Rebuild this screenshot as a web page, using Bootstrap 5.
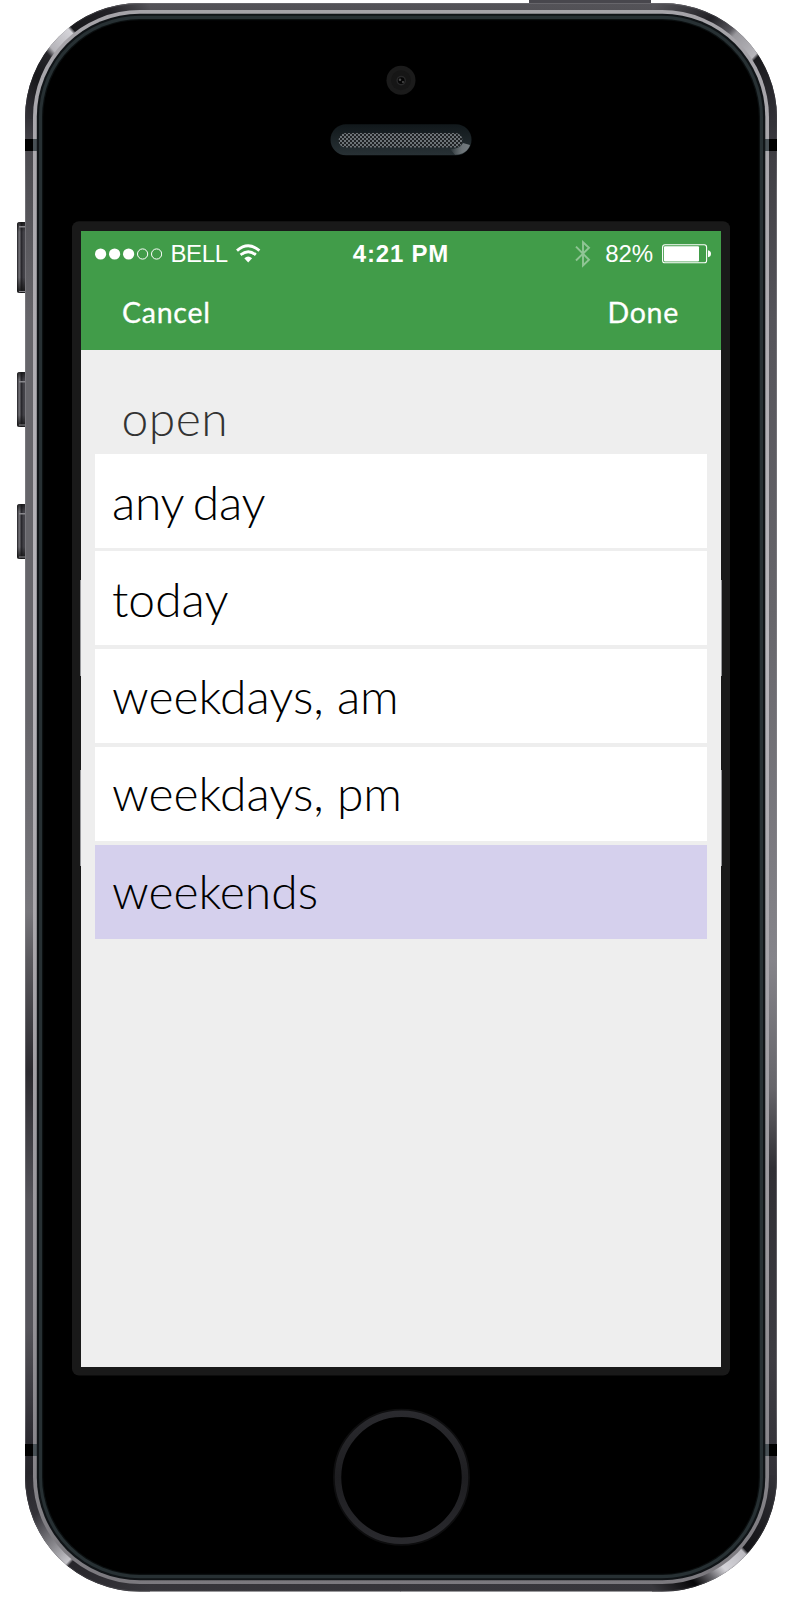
<!DOCTYPE html>
<html lang="en">
<head>
<meta charset="utf-8">
<meta name="viewport" content="width=device-width, initial-scale=1">
<title>Opening hours</title>
<link href="https://cdn.jsdelivr.net/npm/bootstrap@5.3.0/dist/css/bootstrap.min.css" rel="stylesheet">
<style>
  body { background:#fff; overflow:hidden; }
  .device { width:800px; height:1600px; padding:231px 79px 0 81px; }
  .device-art { left:0; top:0; }
  .screen { width:640px; height:1136px; background:#eee; }
  .topbar { height:119px; background:#419c49; color:#fff; }
  .status { height:45px; padding:0 10px 0 14px; font:24px/45px "Liberation Sans",Arial,sans-serif; }
  .status > div { flex:1 1 0; }
  .carrier { margin-left:8.5px; margin-right:.5px; letter-spacing:-.4px; }
  .clock { font-weight:700; letter-spacing:.8px; margin-left:-2px; margin-right:2px; }
  .status .clock { flex:0 0 auto; }
  .charge { margin-left:14px; margin-right:9px; letter-spacing:-.1px; }
  .tb-action { font:400 28.5px/34px Lato,"Open Sans",sans-serif; letter-spacing:.75px; color:#fff; -webkit-text-stroke:.3px #fff; }
  .actions { height:74px; padding:19px 42px 0 41px; }
  .heading-open { font:300 48px/58px Lato,"Open Sans",sans-serif; letter-spacing:.5px; color:#333; padding:39px 0 0 40.5px; height:104px; margin:0; }
  .days { width:612px; margin-left:14px; gap:4px; }
  .days .list-group-item { height:94px; border:0; border-radius:0; padding:19px 0 0 17px; font:300 48px/58px Lato,"Open Sans",sans-serif; color:#000; background:#fff; }
  .days .list-group-item:first-child { margin-bottom:-1px; word-spacing:-3px; letter-spacing:-.3px; }
  .days .list-group-item:nth-child(n+3) { padding-top:18px; }
  .days .list-group-item:nth-child(n+4) { padding-top:17px; }
  .days .list-group-item.active { background:#d5d0ed; color:#000; margin-top:0; }
</style>
</head>
<body>
<main class="device position-relative">
  <svg class="device-art position-absolute" width="800" height="1600" viewBox="0 0 800 1600" aria-hidden="true">
    <defs>
      <linearGradient id="sideL" gradientUnits="userSpaceOnUse" x1="0" y1="0" x2="0" y2="1600">
        <stop offset="0" stop-color="#555459"/><stop offset=".075" stop-color="#333238"/><stop offset=".095" stop-color="#4c4b50"/><stop offset=".2" stop-color="#66656a"/>
        <stop offset=".45" stop-color="#66656a"/><stop offset=".57" stop-color="#77767b"/><stop offset=".6" stop-color="#5a595e"/><stop offset=".67" stop-color="#2b2a2f"/>
        <stop offset=".75" stop-color="#55545a"/><stop offset=".83" stop-color="#55545a"/><stop offset=".9" stop-color="#2b2a30"/><stop offset=".92" stop-color="#26252a"/><stop offset="1" stop-color="#38373c"/>
      </linearGradient>
      <linearGradient id="sideR" gradientUnits="userSpaceOnUse" x1="0" y1="0" x2="0" y2="1600">
        <stop offset="0" stop-color="#555459"/><stop offset=".076" stop-color="#333238"/><stop offset=".1" stop-color="#403f44"/><stop offset=".2" stop-color="#55545a"/>
        <stop offset=".38" stop-color="#66656a"/><stop offset=".6" stop-color="#85848a"/><stop offset=".68" stop-color="#66656a"/><stop offset=".73" stop-color="#302f34"/>
        <stop offset=".85" stop-color="#3d3c42"/><stop offset=".92" stop-color="#333238"/><stop offset="1" stop-color="#38373c"/>
      </linearGradient>
      <linearGradient id="rim" x1="0" y1="0" x2="0" y2="1">
        <stop offset="0" stop-color="#a5a3a8"/><stop offset=".4" stop-color="#b7b5ba"/><stop offset=".8" stop-color="#98969b"/><stop offset="1" stop-color="#7b797e"/>
      </linearGradient>
      <linearGradient id="tl" gradientUnits="userSpaceOnUse" x1="26" y1="120" x2="150" y2="5">
        <stop offset="0" stop-color="#333238"/><stop offset=".22" stop-color="#18181b"/><stop offset=".36" stop-color="#26252a"/><stop offset=".4" stop-color="#b5b4b9"/>
        <stop offset=".55" stop-color="#d5d4d9"/><stop offset=".57" stop-color="#18181b"/><stop offset=".8" stop-color="#222126"/><stop offset="1" stop-color="#555459"/>
      </linearGradient>
      <linearGradient id="tr" gradientUnits="userSpaceOnUse" x1="655" y1="5" x2="776" y2="120">
        <stop offset="0" stop-color="#555459"/><stop offset=".3" stop-color="#222126"/><stop offset=".43" stop-color="#55545a"/><stop offset=".47" stop-color="#99989d"/>
        <stop offset=".64" stop-color="#b7b6bb"/><stop offset=".66" stop-color="#18181b"/><stop offset="1" stop-color="#333238"/>
      </linearGradient>
      <linearGradient id="bl" gradientUnits="userSpaceOnUse" x1="26" y1="1475" x2="150" y2="1590">
        <stop offset="0" stop-color="#26252a"/><stop offset=".2" stop-color="#333238"/><stop offset=".4" stop-color="#88878c"/><stop offset=".53" stop-color="#c6c5ca"/>
        <stop offset=".55" stop-color="#26252a"/><stop offset="1" stop-color="#38373c"/>
      </linearGradient>
      <linearGradient id="br" gradientUnits="userSpaceOnUse" x1="655" y1="1590" x2="776" y2="1475">
        <stop offset="0" stop-color="#38373c"/><stop offset=".2" stop-color="#050507"/><stop offset=".3" stop-color="#66656a"/><stop offset=".39" stop-color="#d5d4d9"/>
        <stop offset=".54" stop-color="#bbbac0"/><stop offset=".56" stop-color="#111114"/><stop offset="1" stop-color="#333238"/>
      </linearGradient>
      <linearGradient id="edge" gradientUnits="userSpaceOnUse" x1="0" y1="0" x2="0" y2="1600">
        <stop offset="0" stop-color="#8a898e" stop-opacity=".4"/><stop offset=".02" stop-color="#8a898e" stop-opacity="0"/><stop offset=".08" stop-color="#8a898e" stop-opacity=".1"/>
        <stop offset=".12" stop-color="#8a898e" stop-opacity=".5"/><stop offset=".88" stop-color="#8a898e" stop-opacity=".5"/><stop offset=".93" stop-color="#8a898e" stop-opacity=".1"/><stop offset="1" stop-color="#8a898e" stop-opacity=".2"/>
      </linearGradient>
      <linearGradient id="key" x1="0" x2="1" y1="0" y2="0">
        <stop offset="0" stop-color="#202024"/><stop offset=".22" stop-color="#77767b"/><stop offset=".45" stop-color="#29282d"/><stop offset=".7" stop-color="#48474d"/><stop offset="1" stop-color="#323137"/>
      </linearGradient>
      <linearGradient id="keyShade" x1="0" x2="0" y1="0" y2="1">
        <stop offset="0" stop-color="#111" stop-opacity=".75"/><stop offset=".14" stop-color="#111" stop-opacity="0"/><stop offset=".78" stop-color="#111" stop-opacity="0"/><stop offset=".95" stop-color="#111" stop-opacity=".7"/>
      </linearGradient>
      <linearGradient id="ear" x1="0" y1="0" x2="0" y2="1"><stop offset="0" stop-color="#11181b"/><stop offset="1" stop-color="#283135"/></linearGradient>
      <linearGradient id="glint" x1="0" y1="0" x2="1" y2="0"><stop offset="0" stop-color="#858c90" stop-opacity="0"/><stop offset=".6" stop-color="#6d7478"/><stop offset="1" stop-color="#757c80"/></linearGradient>
      <pattern id="mesh" width="4" height="4" patternUnits="userSpaceOnUse"><rect width="4" height="4" fill="#1f2224"/><rect width="2" height="2" fill="#6d7377"/><rect x="2" y="2" width="2" height="2" fill="#6d7377"/></pattern>
      <linearGradient id="ring" x1="0" y1="0" x2="0" y2="1"><stop offset="0" stop-color="#2a2a2e"/><stop offset=".5" stop-color="#1e1e21"/><stop offset="1" stop-color="#29292d"/></linearGradient>
    </defs>
    <!-- hardware keys -->
    <rect x="529" y="-4" width="122" height="8" rx="1" fill="#48474d"/>
    <g fill="url(#key)">
      <rect x="17" y="222" width="10" height="71" rx="2.5"/><rect x="17" y="372" width="10" height="55" rx="2.5"/><rect x="17" y="504" width="10" height="55" rx="2.5"/>
    </g>
    <g fill="url(#keyShade)">
      <rect x="17" y="222" width="10" height="71" rx="2.5"/><rect x="17" y="372" width="10" height="55" rx="2.5"/><rect x="17" y="504" width="10" height="55" rx="2.5"/>
    </g>
    <path d="M19 226h6v1.5h-6zM19 291h6v1h-6zM19 381h6v1.5h-6zM19 424.500h6v1h-6zM19 513h6v1.500h-6zM19 556.500h6v1h-6z" fill="#88878c"/>
    <!-- metal band -->
    <path d="M401 3H140A115 115 0 0 0 25 118V1476.600A115 115 0 0 0 140 1591.600H401Z" fill="url(#sideL)"/>
    <path d="M400.500 3H662A115 115 0 0 1 777 118V1476.600A115 115 0 0 1 662 1591.600H400.500Z" fill="url(#sideR)"/>
    <g fill="none" stroke-width="9">
      <path d="M29.500 119V118A110.500 110.500 0 0 1 140 7.500H150" stroke="url(#tl)"/>
      <path d="M652 7.500H662A110.500 110.500 0 0 1 772.500 118V120" stroke="url(#tr)"/>
      <path d="M29.500 1475V1476.600A110.500 110.500 0 0 0 140 1587.100H150" stroke="url(#bl)"/>
      <path d="M652 1587.100H662A110.500 110.500 0 0 0 772.500 1476.600V1475" stroke="url(#br)"/>
    </g>
    <rect x="25.500" y="3.500" width="751" height="1587.600" rx="114.500" fill="none" stroke="url(#edge)"/>
    <path d="M25 139h9v12h-9zM768 139h9v12h-9zM25 1444h9v12h-9zM768 1444h9v12h-9z" fill="#000"/>
    <rect x="33" y="10" width="736" height="1574" rx="107" fill="url(#rim)"/>
    <path d="M33 139h4v12h-4zM765 139h4v12h-4zM33 1444h4v12h-4zM765 1444h4v12h-4z" fill="#485055"/>
    <rect x="36.800" y="13.700" width="728.500" height="1566.600" rx="103" fill="#101417"/>
    <rect x="39" y="15.700" width="724" height="1562.600" rx="101" fill="#273033"/>
    <rect x="42" y="19" width="718" height="1556" rx="98" fill="#0b0f10"/>
    <rect x="43.200" y="20.200" width="715.600" height="1553.600" rx="97" fill="#000"/>
    <!-- camera and earpiece -->
    <circle cx="401" cy="80.300" r="14.500" fill="#1b1b1b"/><circle cx="401" cy="80.300" r="10" fill="#161616"/>
    <circle cx="401.200" cy="80.600" r="4.800" fill="#29292a"/><circle cx="401.200" cy="80.600" r="3.400" fill="#050505"/><circle cx="400" cy="79.700" r="1.300" fill="#4b4b4c"/><circle cx="403" cy="82" r=".9" fill="#555"/>
    <rect x="330.500" y="124.300" width="141" height="31" rx="15.500" fill="url(#ear)"/>
    <path d="M450 149Q460 149 463 143L470 145C468 151 463 154.500 455 154.800Z" fill="url(#glint)"/>
    <rect x="338.500" y="133" width="124" height="14.500" rx="7.200" fill="url(#mesh)"/>
    <!-- display bezel -->
    <rect x="72" y="221.200" width="658" height="1154.400" rx="7" fill="#191919"/>
    <path d="M80 580h1v96h-1zM721 580h1v96h-1zM80 770h1v96h-1zM721 770h1v96h-1z" fill="#96979a"/>
    <!-- home button -->
    <circle cx="401.500" cy="1477.300" r="67" fill="none" stroke="#0d0d0e" stroke-width="3"/>
    <circle cx="401.500" cy="1477.300" r="63.500" fill="none" stroke="url(#ring)" stroke-width="6.500"/>
  </svg>

  <section class="screen position-relative">
    <header class="topbar">
      <div class="status d-flex align-items-center">
        <div class="d-flex align-items-center">
          <svg width="67" height="12" viewBox="0 0 67 12"><g fill="#fff"><circle cx="5.6" cy="6" r="5.6"/><circle cx="19.6" cy="6" r="5.6"/><circle cx="33.6" cy="6" r="5.6"/></g><g fill="none" stroke="#fff"><circle cx="47.6" cy="6" r="5.1"/><circle cx="61.6" cy="6" r="5.1"/></g></svg>
          <span class="carrier">BELL</span>
          <svg class="ms-2" width="25" height="19" viewBox="0 0 25 19"><path d="M12.2 18.5L8.3 14.3Q12.2 10.9 16.1 14.3Z" fill="#fff"/><path d="M4.6 10.9Q12.2 4.5 19.8 10.9M1 6.6Q12.2-3 23.4 6.6" fill="none" stroke="#fff" stroke-width="2.9"/></svg>
        </div>
        <div class="clock">4:21 PM</div>
        <div class="d-flex align-items-center justify-content-end">
          <svg width="16" height="28" viewBox="0 0 16 28"><path d="M1 6.600L14 19.800L8 25.500V2.200L14 7.800L1 20.500" fill="none" stroke="#fff" stroke-opacity=".42" stroke-width="1.900"/></svg>
          <span class="charge">82%</span>
          <svg width="49" height="20" viewBox="0 0 49 20"><rect x=".6" y=".8" width="44" height="18" rx="2.4" fill="none" stroke="#fff" stroke-width="1.1"/><rect x="2" y="2.2" width="35" height="15.2" rx="1" fill="#fff"/><path d="M46 6.3Q49 7 49 9.8T46 13.3Z" fill="#fff"/></svg>
        </div>
      </div>
      <nav class="actions d-flex justify-content-between align-items-start">
        <a class="tb-action text-decoration-none" href="#">Cancel</a>
        <a class="tb-action text-decoration-none" href="#">Done</a>
      </nav>
    </header>
    <h1 class="heading-open">open</h1>
    <div class="days list-group">
      <div class="list-group-item">any day</div>
      <div class="list-group-item">today</div>
      <div class="list-group-item">weekdays, am</div>
      <div class="list-group-item">weekdays, pm</div>
      <div class="list-group-item active">weekends</div>
    </div>
  </section>
</main>
<script src="https://cdn.jsdelivr.net/npm/bootstrap@5.3.0/dist/js/bootstrap.bundle.min.js"></script>
</body>
</html>
